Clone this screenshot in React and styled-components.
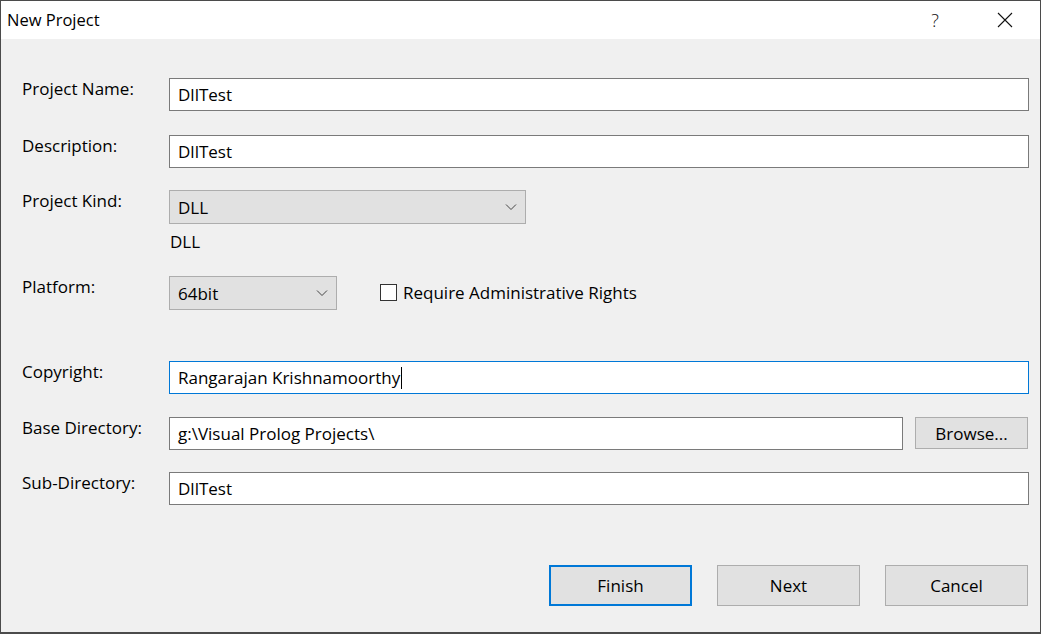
import React from "react";
import styled, { createGlobalStyle } from "styled-components";

const Global = createGlobalStyle`
  html, body { margin: 0; padding: 0; background: #ffffff; }
  body { font-family: "Open Sans", "Noto Sans", sans-serif; }
  * { box-sizing: border-box; }
`;

const Window = styled.div`
  width: 1041px;
  height: 634px;
  display: flex;
  flex-direction: column;
  border: 1px solid #4b4b4b;
  border-bottom-width: 2px;
  background: #f0f0f0;
  font-family: "Open Sans", "Noto Sans", sans-serif;
  font-size: 17px;
  color: #000;
`;

const TitleBar = styled.div`
  height: 38px;
  flex: none;
  display: flex;
  align-items: center;
  background: #ffffff;
  padding-left: 6px;
`;

const Title = styled.div`
  flex: 1;
  font-size: 16.5px;
  padding-bottom: 1px;
`;

const TitleButton = styled.div`
  width: 70px;
  height: 38px;
  display: flex;
  align-items: center;
  justify-content: center;
  font-size: 18px;
  font-weight: 300;
  color: #111;
`;

const Body = styled.div`
  flex: 1;
  display: flex;
  flex-direction: column;
  padding: 39px 12px 0 21px;
`;

const Row = styled.div`
  display: flex;
  align-items: flex-start;
  margin-top: ${(p) => p.$mt || 0}px;
`;

const Label = styled.div`
  width: 147px;
  flex: none;
  line-height: 22px;
  font-size: 17px;
`;

const Field = styled.div`
  flex: 1;
  height: 33px;
  margin-right: -1px;
  display: flex;
  align-items: center;
  padding: 0 8px;
  background: #ffffff;
  border: 1px solid ${(p) => (p.$focused ? "#0078d7" : "#7a7a7a")};
  font-size: 17px;
  white-space: nowrap;
`;

const Caret = styled.span`
  display: inline-block;
  width: 1px;
  height: 22px;
  margin-left: 1px;
  background: #000;
`;

const Select = styled.div`
  width: ${(p) => p.$width}px;
  flex: none;
  height: 34px;
  display: flex;
  align-items: center;
  justify-content: space-between;
  padding: 0 8px 0 8px;
  background: #e1e1e1;
  border: 1px solid #adadad;
  font-size: 17px;
`;

const Chevron = () => (
  <svg width="12" height="8" viewBox="0 0 12 8">
    <polyline points="1,1.5 6,6.5 11,1.5" fill="none" stroke="#444" strokeWidth="1" />
  </svg>
);

const Note = styled.div`
  margin: 7px 0 0 148px;
  line-height: 22px;
  font-size: 17px;
`;

const CheckGroup = styled.label`
  display: flex;
  align-items: center;
  gap: 6px;
  height: 33px;
  margin-left: 43px;
  font-size: 17px;
`;

const CheckBox = styled.span`
  width: 17px;
  height: 17px;
  border: 1px solid #333;
  background: #fff;
  display: inline-block;
`;

const Button = styled.div`
  width: ${(p) => p.$width}px;
  height: ${(p) => p.$height}px;
  flex: none;
  display: flex;
  align-items: center;
  justify-content: center;
  background: #e1e1e1;
  border: ${(p) => (p.$default ? "2px solid #0078d7" : "1px solid #adadad")};
  font-size: 17px;
  margin-left: ${(p) => p.$ml || 0}px;
`;

const ButtonBar = styled.div`
  display: flex;
  justify-content: flex-end;
  gap: 25px;
  margin-top: 60px;
`;

const CloseIcon = () => (
  <svg width="16" height="16" viewBox="0 0 16 16">
    <path d="M1 1 L15 15 M15 1 L1 15" stroke="#111" strokeWidth="1.1" fill="none" />
  </svg>
);

export default function App() {
  return (
    <>
      <Global />
      <Window>
        <TitleBar>
          <Title>New Project</Title>
          <TitleButton>?</TitleButton>
          <TitleButton>
            <CloseIcon />
          </TitleButton>
        </TitleBar>
        <Body>
          <Row>
            <Label>Project Name:</Label>
            <Field>DllTest</Field>
          </Row>
          <Row $mt={24}>
            <Label>Description:</Label>
            <Field>DllTest</Field>
          </Row>
          <Row $mt={22}>
            <Label>Project Kind:</Label>
            <Select $width={357}>
              <span>DLL</span>
              <Chevron />
            </Select>
          </Row>
          <Note>DLL</Note>
          <Row $mt={23}>
            <Label>Platform:</Label>
            <Select $width={168}>
              <span>64bit</span>
              <Chevron />
            </Select>
            <CheckGroup>
              <CheckBox />
              Require Administrative Rights
            </CheckGroup>
          </Row>
          <Row $mt={51}>
            <Label>Copyright:</Label>
            <Field $focused>
              Rangarajan Krishnamoorthy
              <Caret />
            </Field>
          </Row>
          <Row $mt={23}>
            <Label>Base Directory:</Label>
            <Field>g:\Visual Prolog Projects\</Field>
            <Button $width={113} $height={32} $ml={13}>
              Browse...
            </Button>
          </Row>
          <Row $mt={22}>
            <Label>Sub-Directory:</Label>
            <Field>DllTest</Field>
          </Row>
          <ButtonBar>
            <Button $width={143} $height={41} $default>
              Finish
            </Button>
            <Button $width={143} $height={41}>
              Next
            </Button>
            <Button $width={143} $height={41}>
              Cancel
            </Button>
          </ButtonBar>
        </Body>
      </Window>
    </>
  );
}
